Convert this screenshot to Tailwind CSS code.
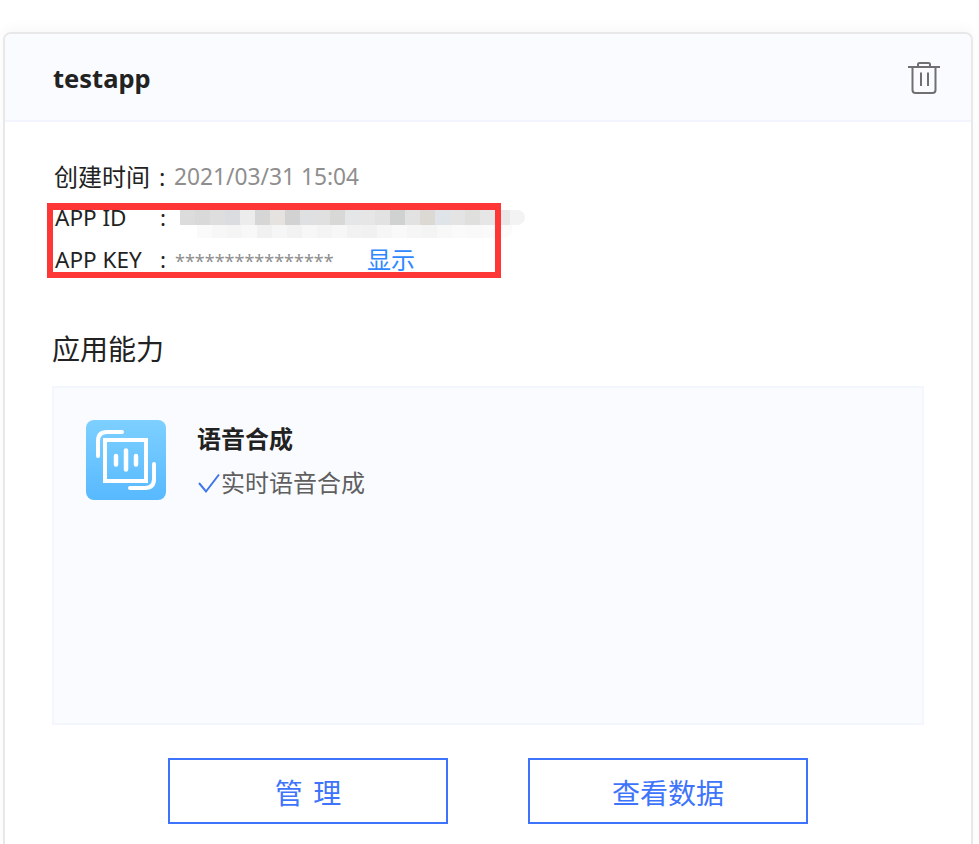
<!DOCTYPE html>
<html lang="zh">
<head>
<meta charset="utf-8">
<script src="https://cdn.jsdelivr.net/npm/@tailwindcss/browser@4"></script>
</head>
<body class="bg-white overflow-hidden">
<div class="relative w-[979px] h-[844px] overflow-hidden font-['Noto_Sans','Noto_Sans_CJK_SC',sans-serif] pt-[32px] pl-[3px] pr-[6px]">
  <div class="h-[900px] rounded-t-[8px] border-2 border-b-0 border-[#e8e8e8] bg-white shadow-[0_-4px_12px_rgba(0,0,0,0.03)]">
    <header class="h-[88px] bg-[#fafbff] border-b-2 border-[#f2f5fd] rounded-t-[6px] flex items-center justify-between pl-[48px] pr-[31px]">
      <h1 class="text-[25.5px] leading-none font-bold text-[#222222] mt-[3px]">testapp</h1>
      <svg class="w-[32px] h-[32px] mt-[2px] text-[#707070]" viewBox="0 0 32 32" fill="none" stroke="currentColor" stroke-width="2">
        <path d="M0.500 5H31.500" stroke-linecap="round"/>
        <path d="M10 5V2.500Q10 1 11.500 1H20.500Q22 1 22 2.500V5"/>
        <path d="M4.500 5V28Q4.500 31 7.500 31H24.500Q27.500 31 27.500 28V5"/>
        <path d="M13 10.500V24M20 10.500V24"/>
      </svg>
    </header>
    <div class="pl-[47px] pr-[47px]">
      <dl class="pt-[33px] text-[#222222]">
        <div class="flex h-[42px] items-center">
          <dt class="w-[122px] pl-[2px] shrink-0 whitespace-nowrap flex text-[24px] translate-y-[1px]"><span class="w-[105px]">创建时间</span><span>:</span></dt>
          <dd class="text-[#8e8e8e] text-[22.75px] translate-y-[1px]">2021/03/31 15:04</dd>
        </div>
        <div class="flex h-[42px] items-center">
          <dt class="w-[122px] pl-[3px] shrink-0 whitespace-nowrap flex text-[22.5px]"><span class="w-[105px]">APP ID</span><span>:</span></dt>
          <dd></dd>
        </div>
        <div class="flex h-[42px] items-center">
          <dt class="w-[122px] pl-[3px] shrink-0 whitespace-nowrap flex text-[22.5px]"><span class="w-[105px]">APP KEY</span><span>:</span></dt>
          <dd class="text-[#8e8e8e] text-[18px] w-[193px] pl-[1px] translate-y-[1px]">****************</dd>
          <dd class="text-[#2f88ff] text-[24px]">显示</dd>
        </div>
      </dl>
      <h2 class="mt-[48px] text-[28px] leading-[40px] text-[#222222]">应用能力</h2>
      <section class="mt-[17px] w-[872px] h-[339px] bg-[#fafbff] border-2 border-[#f3f6fc] pl-[32px] pt-[32px] flex gap-[31px]">
        <svg class="w-[80px] h-[80px] shrink-0" viewBox="0 0 80 80" fill="none">
          <defs><linearGradient id="g" x1="0" y1="0" x2="0" y2="1"><stop offset="0" stop-color="#7dd0ff"/><stop offset="1" stop-color="#58b9ff"/></linearGradient></defs>
          <rect width="80" height="80" rx="8" fill="url(#g)"/>
          <g stroke="#ffffff" stroke-width="4" stroke-linecap="round">
            <path d="M12 36V21Q12 12 21 12H36"/>
            <path d="M68 44V59Q68 68 59 68H44"/>
            <rect x="19" y="20" width="41" height="41" stroke-linecap="butt"/>
            <path d="M30 36V44.500M40 30.500V49.500M50 36V44.500" stroke-width="4.500"/>
          </g>
        </svg>
        <div class="pt-[2px]">
          <h3 class="text-[24px] leading-[34px] font-bold text-[#222222]">语音合成</h3>
          <p class="mt-[10px] text-[24px] leading-[34px] text-[#5f5f5f] flex items-center">
            <svg class="w-[24px] h-[24px] shrink-0" viewBox="0 0 24 24" fill="none" stroke="#3f77ea" stroke-width="2"><path d="M2 12L9 20.5L22 3.5"/></svg>实时语音合成
          </p>
        </div>
      </section>
      <div class="mt-[33px] w-[872px] flex justify-center gap-[80px]">
        <button class="w-[280px] h-[66px] border-2 border-[#3d74fb] text-[#3d74fb] text-[28px] leading-none pt-[4px] [word-spacing:3px]">管 理</button>
        <button class="w-[280px] h-[66px] border-2 border-[#3d74fb] text-[#3d74fb] text-[28px] leading-none pt-[4px]">查看数据</button>
      </div>
    </div>
  </div>

  <!-- pixelated redaction over the APP ID value -->
  <div class="absolute left-[180px] top-[210px] flex">
    <i class="block w-[15px] h-[15px] bg-[#dcdcdc]"></i><i class="block w-[15px] h-[15px] bg-[#d9d9d9]"></i><i class="block w-[15px] h-[15px] bg-[#dedede]"></i><i class="block w-[15px] h-[15px] bg-[#dadcdf]"></i><i class="block w-[15px] h-[15px] bg-[#ececec]"></i><i class="block w-[15px] h-[15px] bg-[#d6d6d6]"></i><i class="block w-[15px] h-[15px] bg-[#e6e2e0]"></i><i class="block w-[15px] h-[15px] bg-[#d2d2d2]"></i><i class="block w-[15px] h-[15px] bg-[#dfe0e2]"></i><i class="block w-[15px] h-[15px] bg-[#e0e0e0]"></i><i class="block w-[15px] h-[15px] bg-[#d8d9d7]"></i><i class="block w-[15px] h-[15px] bg-[#e4e6e8]"></i><i class="block w-[15px] h-[15px] bg-[#e6e6e6]"></i><i class="block w-[15px] h-[15px] bg-[#e2e2e2]"></i><i class="block w-[15px] h-[15px] bg-[#cfd2d0]"></i><i class="block w-[15px] h-[15px] bg-[#e2e2e2]"></i><i class="block w-[15px] h-[15px] bg-[#dcd8d4]"></i><i class="block w-[15px] h-[15px] bg-[#dfe4e8]"></i><i class="block w-[15px] h-[15px] bg-[#e4e4e4]"></i><i class="block w-[15px] h-[15px] bg-[#dfdfdd]"></i><i class="block w-[15px] h-[15px] bg-[#e6e6e6]"></i><i class="block w-[15px] h-[15px] bg-[#e8e8e8]"></i><i class="block w-[15px] h-[15px] rounded-r-[8px] bg-[#f3f3f3]"></i>
  </div>
  <div class="absolute left-[197px] top-[225px] flex">
    <i class="block w-[15px] h-[13px] bg-[#fafafa]"></i><i class="block w-[15px] h-[13px] bg-[#f7f7f7]"></i><i class="block w-[15px] h-[13px] bg-[#f5f5f5]"></i><i class="block w-[15px] h-[13px] bg-[#f8f8f8]"></i><i class="block w-[15px] h-[13px] bg-[#f1f1f1]"></i><i class="block w-[15px] h-[13px] bg-[#f6f6f6]"></i><i class="block w-[15px] h-[13px] bg-[#f2f2f2]"></i><i class="block w-[15px] h-[13px] bg-[#f7f7f7]"></i><i class="block w-[15px] h-[13px] bg-[#f4f4f4]"></i><i class="block w-[15px] h-[13px] bg-[#f7f7f7]"></i><i class="block w-[15px] h-[13px] bg-[#f2f2f2]"></i><i class="block w-[15px] h-[13px] bg-[#f1f1f1]"></i><i class="block w-[15px] h-[13px] bg-[#f6f6f6]"></i><i class="block w-[15px] h-[13px] bg-[#f9f9f9]"></i><i class="block w-[15px] h-[13px] bg-[#f6f6f6]"></i><i class="block w-[15px] h-[13px] bg-[#f4f4f4]"></i><i class="block w-[15px] h-[13px] bg-[#f8f8f8]"></i><i class="block w-[15px] h-[13px] bg-[#fafafa]"></i><i class="block w-[15px] h-[13px] bg-[#f9f9f9]"></i><i class="block w-[15px] h-[13px] bg-[#fafafa]"></i><i class="block w-[15px] h-[13px] rounded-br-[8px] bg-[#fbfbfb]"></i>
  </div>
  <!-- red annotation box -->
  <div class="absolute left-[47px] top-[203px] w-[454px] h-[75px] border-[6px] border-t-[7px] border-[#ff3636]"></div>
</div>
</body>
</html>
